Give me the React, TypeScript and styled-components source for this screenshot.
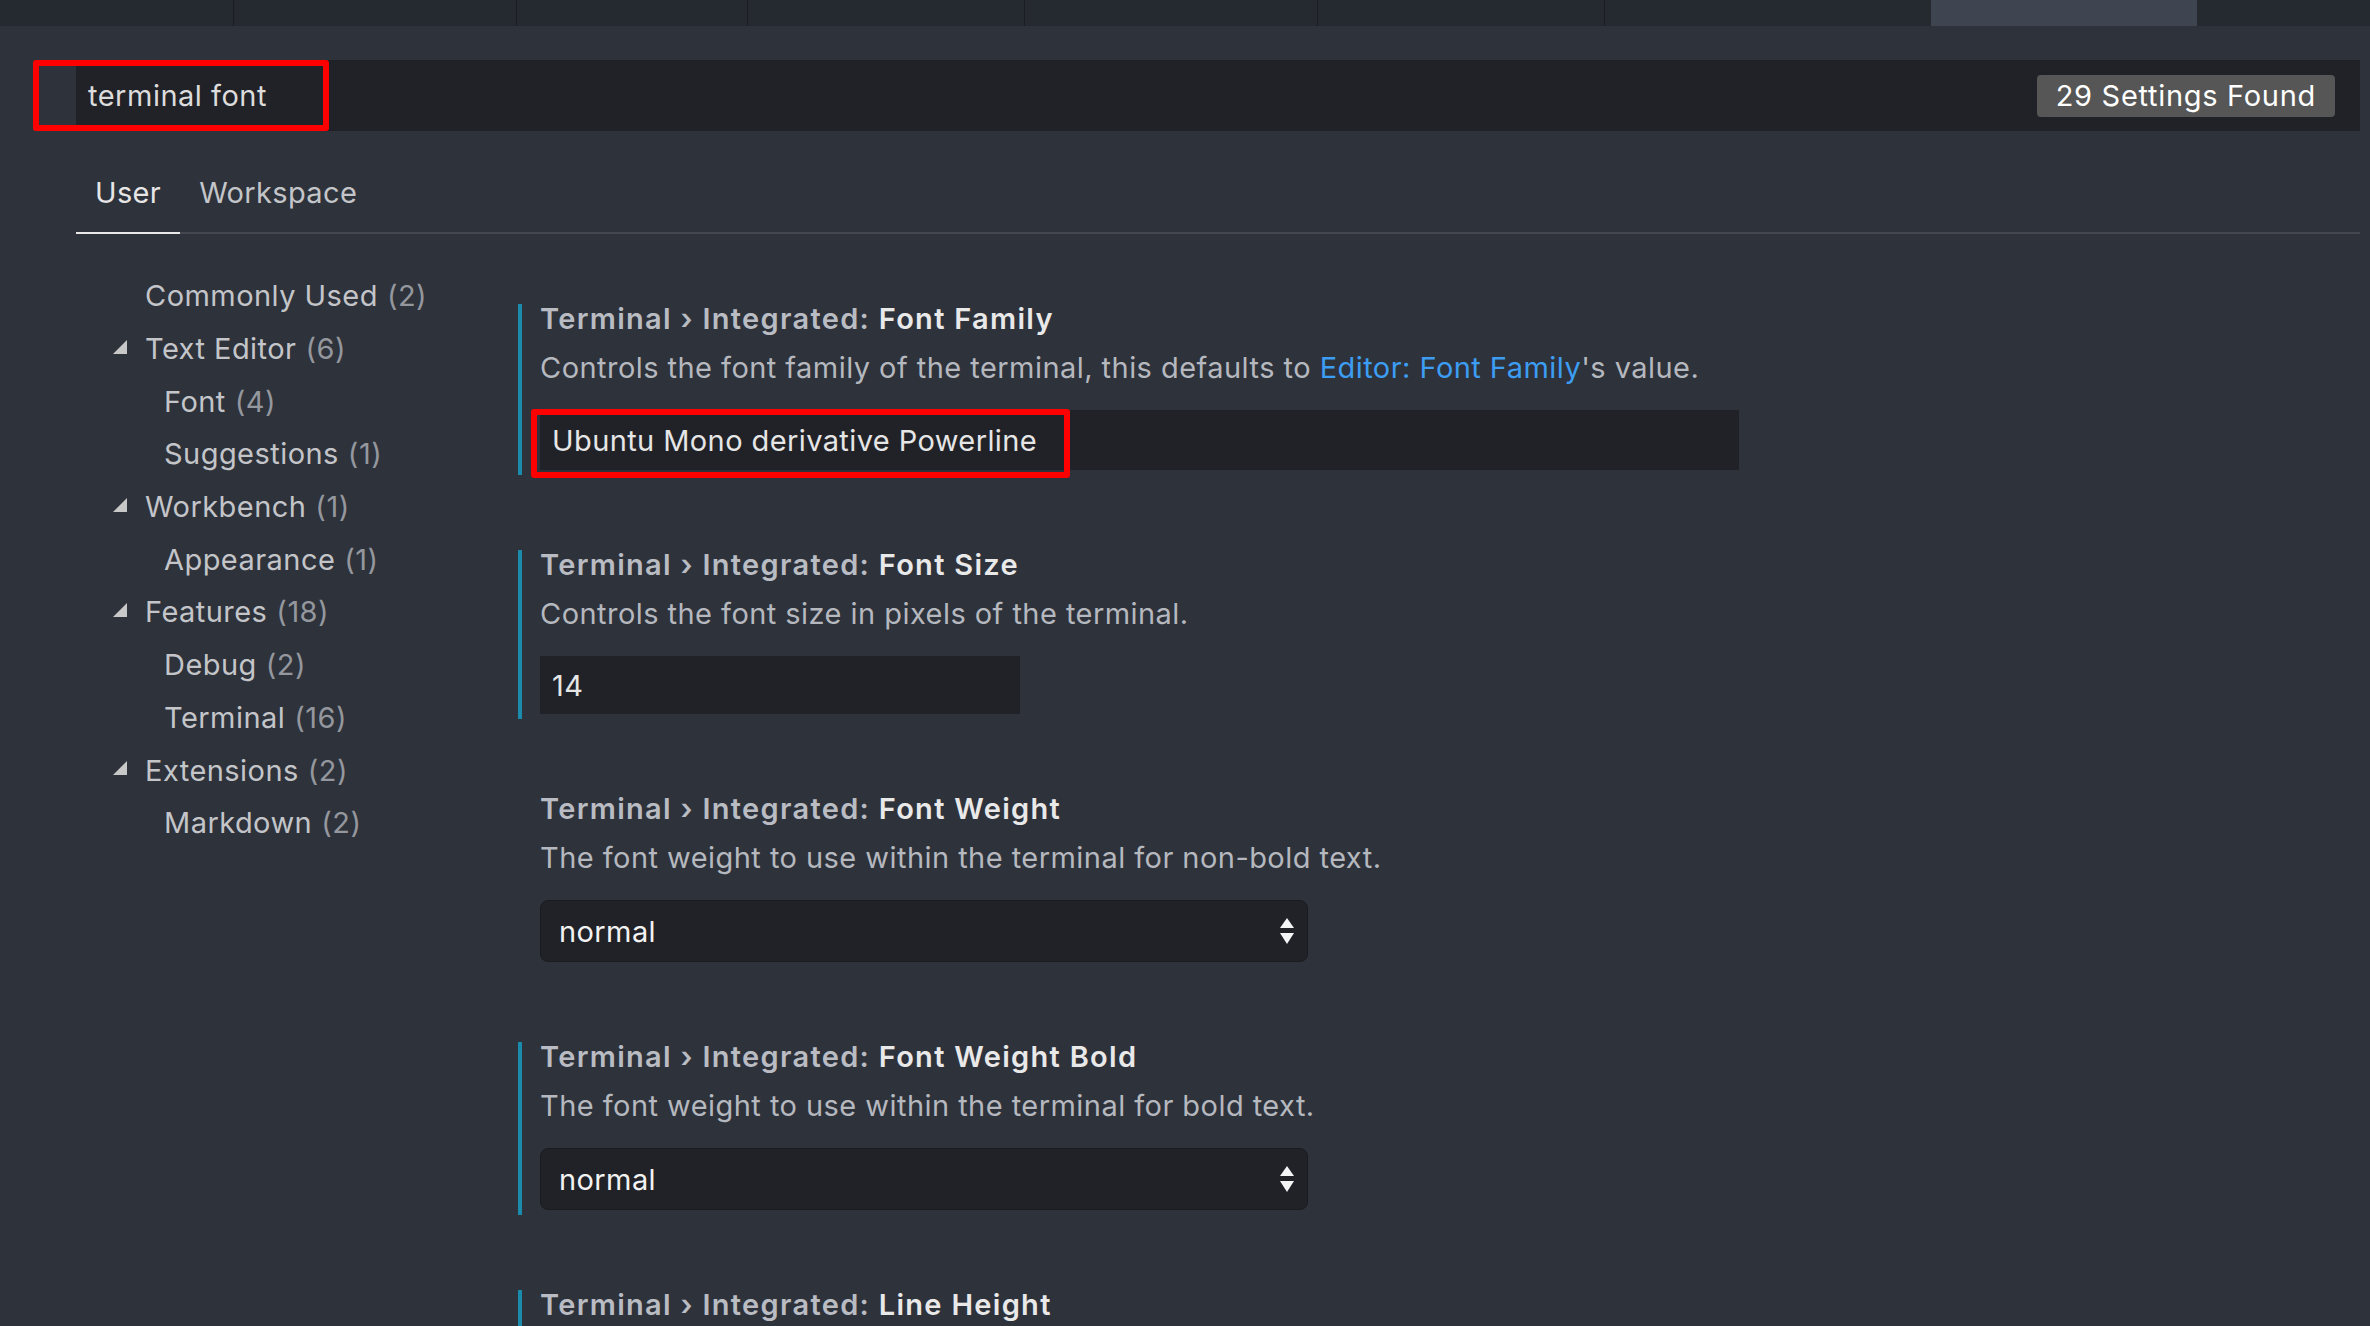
import React from "react";
import styled, { createGlobalStyle } from "styled-components";

const GlobalStyle = createGlobalStyle`
  html, body {
    margin: 0;
    padding: 0;
    background: #2e323b;
    width: 2370px;
    height: 1326px;
    overflow: hidden;
  }
  body {
    font-family: Inter, "Noto Sans", "Liberation Sans", sans-serif;
    -webkit-font-smoothing: antialiased;
  }
  * { box-sizing: border-box; }
`;

const Page = styled.div`
  width: 2370px;
  height: 1326px;
  background: #2e323b;
  display: flex;
  flex-direction: column;
`;

const TabStrip = styled.div`
  display: flex;
  height: 26px;
  background: #252930;
  flex-shrink: 0;
`;

const EditorTab = styled.div<{ $w: number; $active?: boolean; $sep?: boolean }>`
  width: ${(p) => p.$w}px;
  height: 26px;
  flex-shrink: 0;
  background: ${(p) => (p.$active ? "#3f4451" : "transparent")};
  border-right: 1px solid ${(p) => (p.$sep ? "#1b1d22" : "transparent")};
`;

const Main = styled.div`
  padding: 0 10px 0 76px;
  display: flex;
  flex-direction: column;
  flex: 1;
`;

const SearchRow = styled.div`
  position: relative;
  margin-top: 34px;
  height: 71px;
  background: #212227;
  display: flex;
  align-items: center;
  justify-content: space-between;
  padding: 0 25px 0 12px;
`;

const SearchText = styled.div`
  font-size: 29px;
  color: #dcdcdc;
  letter-spacing: 0.5px;
`;

const Badge = styled.div`
  background: #565656;
  color: #ffffff;
  font-size: 29px;
  letter-spacing: 0.7px;
  height: 42px;
  line-height: 42px;
  padding: 0 19px;
  border-radius: 4px;
`;

const Annotation = styled.div<{ $l: number; $t: number; $w: number; $h: number }>`
  position: absolute;
  left: ${(p) => p.$l}px;
  top: ${(p) => p.$t}px;
  width: ${(p) => p.$w}px;
  height: ${(p) => p.$h}px;
  border: 6px solid #ff0000;
  border-radius: 3px;
  pointer-events: none;
`;

const ScopeTabs = styled.div`
  margin-top: 42px;
  display: flex;
  border-bottom: 2px solid #44474e;
`;

const ScopeTab = styled.div<{ $active?: boolean }>`
  padding: 0 19px 19px;
  line-height: 40px;
  font-size: 29px;
  letter-spacing: 0.35px;
  color: ${(p) => (p.$active ? "#e6e6e6" : "#c3c5c9")};
  margin-bottom: -2px;
  border-bottom: 2px solid ${(p) => (p.$active ? "#e8e8e8" : "transparent")};
`;

const Body = styled.div`
  display: grid;
  grid-template-columns: 442px 1fr;
  flex: 1;
`;

const Sidebar = styled.div`
  padding-top: 35.5px;
  display: flex;
  flex-direction: column;
`;

const TreeRow = styled.div<{ $child?: boolean }>`
  height: 52.7px;
  display: flex;
  align-items: center;
  padding-left: ${(p) => (p.$child ? 88 : 37)}px;
  font-size: 29px;
  color: #c3c5c9;
  letter-spacing: 0.45px;
  white-space: nowrap;
`;

const TwistieSlot = styled.span`
  width: 14px;
  height: 14px;
  margin-right: 18px;
  margin-top: -4px;
  display: inline-flex;
`;

const Count = styled.span`
  color: #94979d;
  margin-left: 9px;
`;

const Settings = styled.div`
  padding-top: 70px;
  display: flex;
  flex-direction: column;
  gap: 75px;
`;

const SettingItem = styled.div<{ $modified?: boolean }>`
  border-left: 4px solid ${(p) => (p.$modified ? "#1b8bab" : "transparent")};
  padding: 0 0 5px 18px;
  display: flex;
  flex-direction: column;
`;

const Title = styled.div`
  font-size: 29px;
  line-height: 30px;
  font-weight: 600;
  letter-spacing: 1.3px;
  color: #b9bcc2;
  white-space: nowrap;
`;

const TitleKey = styled.span`
  color: #e9e9e9;
`;

const Description = styled.div`
  margin-top: 17px;
  font-size: 29px;
  line-height: 34px;
  letter-spacing: 0.45px;
  color: #b5b8be;
  white-space: nowrap;
`;

const Link = styled.span`
  color: #3c9df2;
`;

const ControlWrap = styled.div`
  position: relative;
  margin-top: 25px;
  align-self: flex-start;
`;

const TextBox = styled.div<{ $w: number; $h: number }>`
  width: ${(p) => p.$w}px;
  height: ${(p) => p.$h}px;
  background: #212227;
  color: #e6e6e6;
  font-size: 29px;
  letter-spacing: 0.4px;
  display: flex;
  align-items: center;
  padding-left: 12px;
`;

const Select = styled.div`
  width: 768px;
  height: 62px;
  background: #212227;
  border: 1px solid #1b1c20;
  border-radius: 8px;
  color: #f2f2f2;
  font-size: 29px;
  letter-spacing: 0.4px;
  display: flex;
  align-items: center;
  justify-content: space-between;
  padding: 0 13px 0 18px;
`;

const Twistie = () => (
  <svg width="14" height="14" viewBox="0 0 14 14">
    <polygon points="0,14 14,14 14,0" fill="#c8c8c8" />
  </svg>
);

const UpDown = () => (
  <svg width="14" height="27" viewBox="0 0 14 27">
    <polygon points="7,0 14,10 0,10" fill="#f5f5f5" />
    <polygon points="0,15 14,15 7,26" fill="#f5f5f5" />
  </svg>
);

const tabs = [
  { w: 234, sep: true },
  { w: 283, sep: true },
  { w: 231, sep: true },
  { w: 277, sep: true },
  { w: 293, sep: true },
  { w: 287, sep: true },
  { w: 326, sep: false },
  { w: 266, sep: false, active: true },
  { w: 173, sep: false },
];

const tree: { label: string; count: number; child?: boolean; twistie?: boolean }[] = [
  { label: "Commonly Used", count: 2 },
  { label: "Text Editor", count: 6, twistie: true },
  { label: "Font", count: 4, child: true },
  { label: "Suggestions", count: 1, child: true },
  { label: "Workbench", count: 1, twistie: true },
  { label: "Appearance", count: 1, child: true },
  { label: "Features", count: 18, twistie: true },
  { label: "Debug", count: 2, child: true },
  { label: "Terminal", count: 16, child: true },
  { label: "Extensions", count: 2, twistie: true },
  { label: "Markdown", count: 2, child: true },
];

export default function App() {
  return (
    <>
      <GlobalStyle />
      <Page>
        <TabStrip>
          {tabs.map((t, i) => (
            <EditorTab key={i} $w={t.w} $sep={t.sep} $active={t.active} />
          ))}
        </TabStrip>
        <Main>
          <SearchRow>
            <SearchText>terminal font</SearchText>
            <Badge>29 Settings Found</Badge>
            <Annotation $l={-43} $t={0} $w={296} $h={71} />
          </SearchRow>
          <ScopeTabs>
            <ScopeTab $active>User</ScopeTab>
            <ScopeTab>Workspace</ScopeTab>
          </ScopeTabs>
          <Body>
            <Sidebar>
              {tree.map((n) => (
                <TreeRow key={n.label} $child={n.child}>
                  {!n.child && <TwistieSlot>{n.twistie && <Twistie />}</TwistieSlot>}
                  {n.label}
                  <Count>({n.count})</Count>
                </TreeRow>
              ))}
            </Sidebar>
            <Settings>
              <SettingItem $modified>
                <Title>
                  Terminal › Integrated: <TitleKey>Font Family</TitleKey>
                </Title>
                <Description>
                  Controls the font family of the terminal, this defaults to <Link>Editor: Font Family</Link>'s value.
                </Description>
                <ControlWrap>
                  <TextBox $w={1199} $h={60}>Ubuntu Mono derivative Powerline</TextBox>
                  <Annotation $l={-9} $t={-1} $w={539} $h={69} />
                </ControlWrap>
              </SettingItem>
              <SettingItem $modified>
                <Title>
                  Terminal › Integrated: <TitleKey>Font Size</TitleKey>
                </Title>
                <Description>Controls the font size in pixels of the terminal.</Description>
                <ControlWrap>
                  <TextBox $w={480} $h={58}>14</TextBox>
                </ControlWrap>
              </SettingItem>
              <SettingItem>
                <Title>
                  Terminal › Integrated: <TitleKey>Font Weight</TitleKey>
                </Title>
                <Description>The font weight to use within the terminal for non-bold text.</Description>
                <ControlWrap>
                  <Select>
                    normal
                    <UpDown />
                  </Select>
                </ControlWrap>
              </SettingItem>
              <SettingItem $modified>
                <Title>
                  Terminal › Integrated: <TitleKey>Font Weight Bold</TitleKey>
                </Title>
                <Description>The font weight to use within the terminal for bold text.</Description>
                <ControlWrap>
                  <Select>
                    normal
                    <UpDown />
                  </Select>
                </ControlWrap>
              </SettingItem>
              <SettingItem $modified>
                <Title>
                  Terminal › Integrated: <TitleKey>Line Height</TitleKey>
                </Title>
                <Description>Controls the line height of the terminal.</Description>
              </SettingItem>
            </Settings>
          </Body>
        </Main>
      </Page>
    </>
  );
}
